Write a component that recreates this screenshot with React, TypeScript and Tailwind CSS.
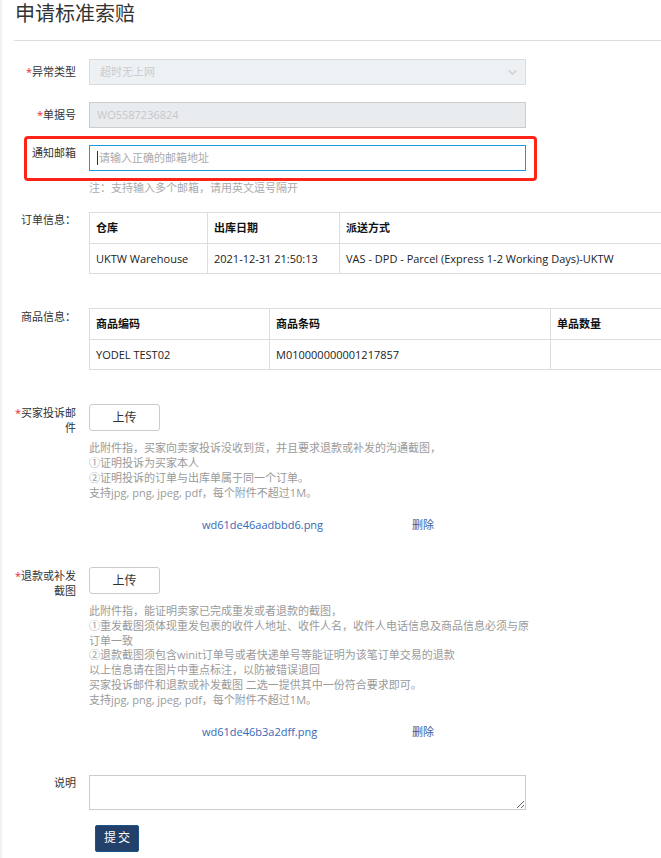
import { ChevronDown } from 'lucide-react'

const font = "font-['Open_Sans','Noto_Sans_CJK_SC',sans-serif]"

function Label({ children, required, className = '' }: { children: React.ReactNode; required?: boolean; className?: string }) {
  return (
    <div className={`w-[62px] shrink-0 text-right text-[#333] ${className}`}>
      {required && <span className="text-[#e23]">*</span>}
      {children}
    </div>
  )
}

function Files({ name }: { name: string }) {
  return (
    <div className="flex leading-[16px] ml-[113px]">
      <span className="w-[210px] text-[#3568b8]">{name}</span>
      <span className="text-[#3d5c9a]">删除</span>
    </div>
  )
}

export default function App() {
  const orderCols = [
    { w: 118, head: '仓库', val: 'UKTW Warehouse' },
    { w: 132, head: '出库日期', val: '2021-12-31 21:50:13' },
    { w: 370, head: '派送方式', val: 'VAS - DPD - Parcel (Express 1-2 Working Days)-UKTW' }
  ]
  const goodsCols = [
    { w: 180, head: '商品编码', val: 'YODEL TEST02' },
    { w: 281, head: '商品条码', val: 'M010000000001217857' },
    { w: 159, head: '单品数量', val: '' }
  ]

  const renderTable = (cols: { w: number; head: string; val: string }[]) => (
    <table className="table-fixed border-collapse w-[620px] shrink-0">
      <colgroup>
        {cols.map((c) => (
          <col key={c.head} style={{ width: c.w }} />
        ))}
      </colgroup>
      <tbody>
        <tr className="h-[31px]">
          {cols.map((c) => (
            <td key={c.head} className="border border-[#dddddd] px-[6px] font-bold text-[#111] align-middle">
              {c.head}
            </td>
          ))}
        </tr>
        <tr className="h-[30px]">
          {cols.map((c) => (
            <td key={c.head} className="border border-[#dddddd] px-[6px] text-[#222] align-middle whitespace-nowrap">
              {c.val}
            </td>
          ))}
        </tr>
      </tbody>
    </table>
  )

  return (
    <div className={`min-h-screen w-full overflow-hidden bg-white border-l-2 border-[#f2f2f2] text-[11px] leading-[16px] ${font}`}>
      <div className="pl-[12px] pb-[8px]">
        {/* Header */}
        <h1 className="text-[20px] leading-[28px] font-normal text-[#333] pl-[1px]">申请标准索赔</h1>
        <div className="mt-[12px] h-px bg-[#dddddd]" />

        {/* 异常类型 */}
        <div className="flex mt-[18px]">
          <Label required className="pt-[5px]">异常类型</Label>
          <div className="ml-[13px] w-[437px] h-[26px] bg-[#eef1f3] border border-[#dcdcdc] flex items-center justify-between pl-[10px] pr-[6px]">
            <span className="text-[#c9cccf]">超时无上网</span>
            <ChevronDown size={13} strokeWidth={3} className="text-[#d0d3d6]" />
          </div>
        </div>

        {/* 单据号 */}
        <div className="flex mt-[17px]">
          <Label required className="pt-[5px]">单据号</Label>
          <div className="ml-[13px] w-[437px] h-[26px] bg-[#e9ecee] border border-[#cccccc] flex items-center pl-[7px]">
            <span className="text-[#c4c7ca]">WO5587236824</span>
          </div>
        </div>

        {/* 通知邮箱 */}
        <div className="relative flex mt-[17px]">
          <div className="absolute left-[10px] top-[-9px] w-[513px] h-[45px] border-[3px] border-[#ff2418] rounded-[4px] pointer-events-none" />
          <Label className="pt-0">通知邮箱</Label>
          <div className="ml-[13px] w-[437px] h-[26px] bg-white border border-[#1a9ae0] flex items-center pl-[7px]">
            <span className="w-px h-[14px] bg-[#333] mr-px" />
            <span className="text-[#aaaaaa]">请输入正确的邮箱地址</span>
          </div>
        </div>
        <div className="ml-[75px] mt-[9px] text-[#aaaaaa]">注：支持输入多个邮箱，请用英文逗号隔开</div>

        {/* 订单信息 */}
        <div className="flex mt-[16px]">
          <Label>订单信息：</Label>
          <div className="ml-[13px]">{renderTable(orderCols)}</div>
        </div>

        {/* 商品信息 */}
        <div className="flex mt-[34px]">
          <Label className="pt-[1px]">商品信息：</Label>
          <div className="ml-[13px]">{renderTable(goodsCols)}</div>
        </div>

        {/* 买家投诉邮件 */}
        <div className="flex mt-[34px]">
          <Label required className="leading-[15px] pt-px">买家投诉邮件</Label>
          <div className="ml-[13px]">
            <button className="w-[71px] h-[27px] border border-[#cccccc] rounded-[3px] bg-white text-[12px] text-[#333]">上传</button>
          </div>
        </div>
        <div className="ml-[75px] mt-[5px] w-[445px] leading-[15px] text-[#9a9a9a]">
          <p>此附件指，买家向卖家投诉没收到货，并且要求退款或补发的沟通截图，</p>
          <p>①证明投诉为买家本人</p>
          <p>②证明投诉的订单与出库单属于同一个订单。</p>
          <p>支持jpg, png, jpeg, pdf，每个附件不超过1M。</p>
        </div>
        <div className="ml-[75px] mt-[17px]">
          <Files name="wd61de46aadbbd6.png" />
        </div>

        {/* 退款或补发截图 */}
        <div className="flex mt-[34px]">
          <Label required className="leading-[15px] pt-px">退款或补发截图</Label>
          <div className="ml-[13px]">
            <button className="w-[71px] h-[27px] border border-[#cccccc] rounded-[3px] bg-white text-[12px] text-[#333]">上传</button>
          </div>
        </div>
        <div className="ml-[75px] mt-[6px] w-[445px] leading-[14.8px] text-[#9a9a9a]">
          <p>此附件指，能证明卖家已完成重发或者退款的截图，</p>
          <p>①重发截图须体现重发包裹的收件人地址、收件人名，收件人电话信息及商品信息必须与原订单一致</p>
          <p>②退款截图须包含winit订单号或者快递单号等能证明为该笔订单交易的退款</p>
          <p>以上信息请在图片中重点标注，以防被错误退回</p>
          <p>买家投诉邮件和退款或补发截图 二选一提供其中一份符合要求即可。</p>
          <p>支持jpg, png, jpeg, pdf，每个附件不超过1M。</p>
        </div>
        <div className="ml-[75px] mt-[16px]">
          <Files name="wd61de46b3a2dff.png" />
        </div>

        {/* 说明 */}
        <div className="flex mt-[35px]">
          <Label>说明</Label>
          <div className="ml-[13px]">
            <textarea className="block w-[437px] h-[35px] border border-[#cccccc] bg-white resize-y outline-none" />
          </div>
        </div>

        <button className="ml-[81px] mt-[15px] w-[44px] h-[27px] bg-[#22406a] border border-[#1d5487] rounded-[2px] text-white text-[12px] tracking-[2px] pl-[2px]">
          提交
        </button>
      </div>
    </div>
  )
}
